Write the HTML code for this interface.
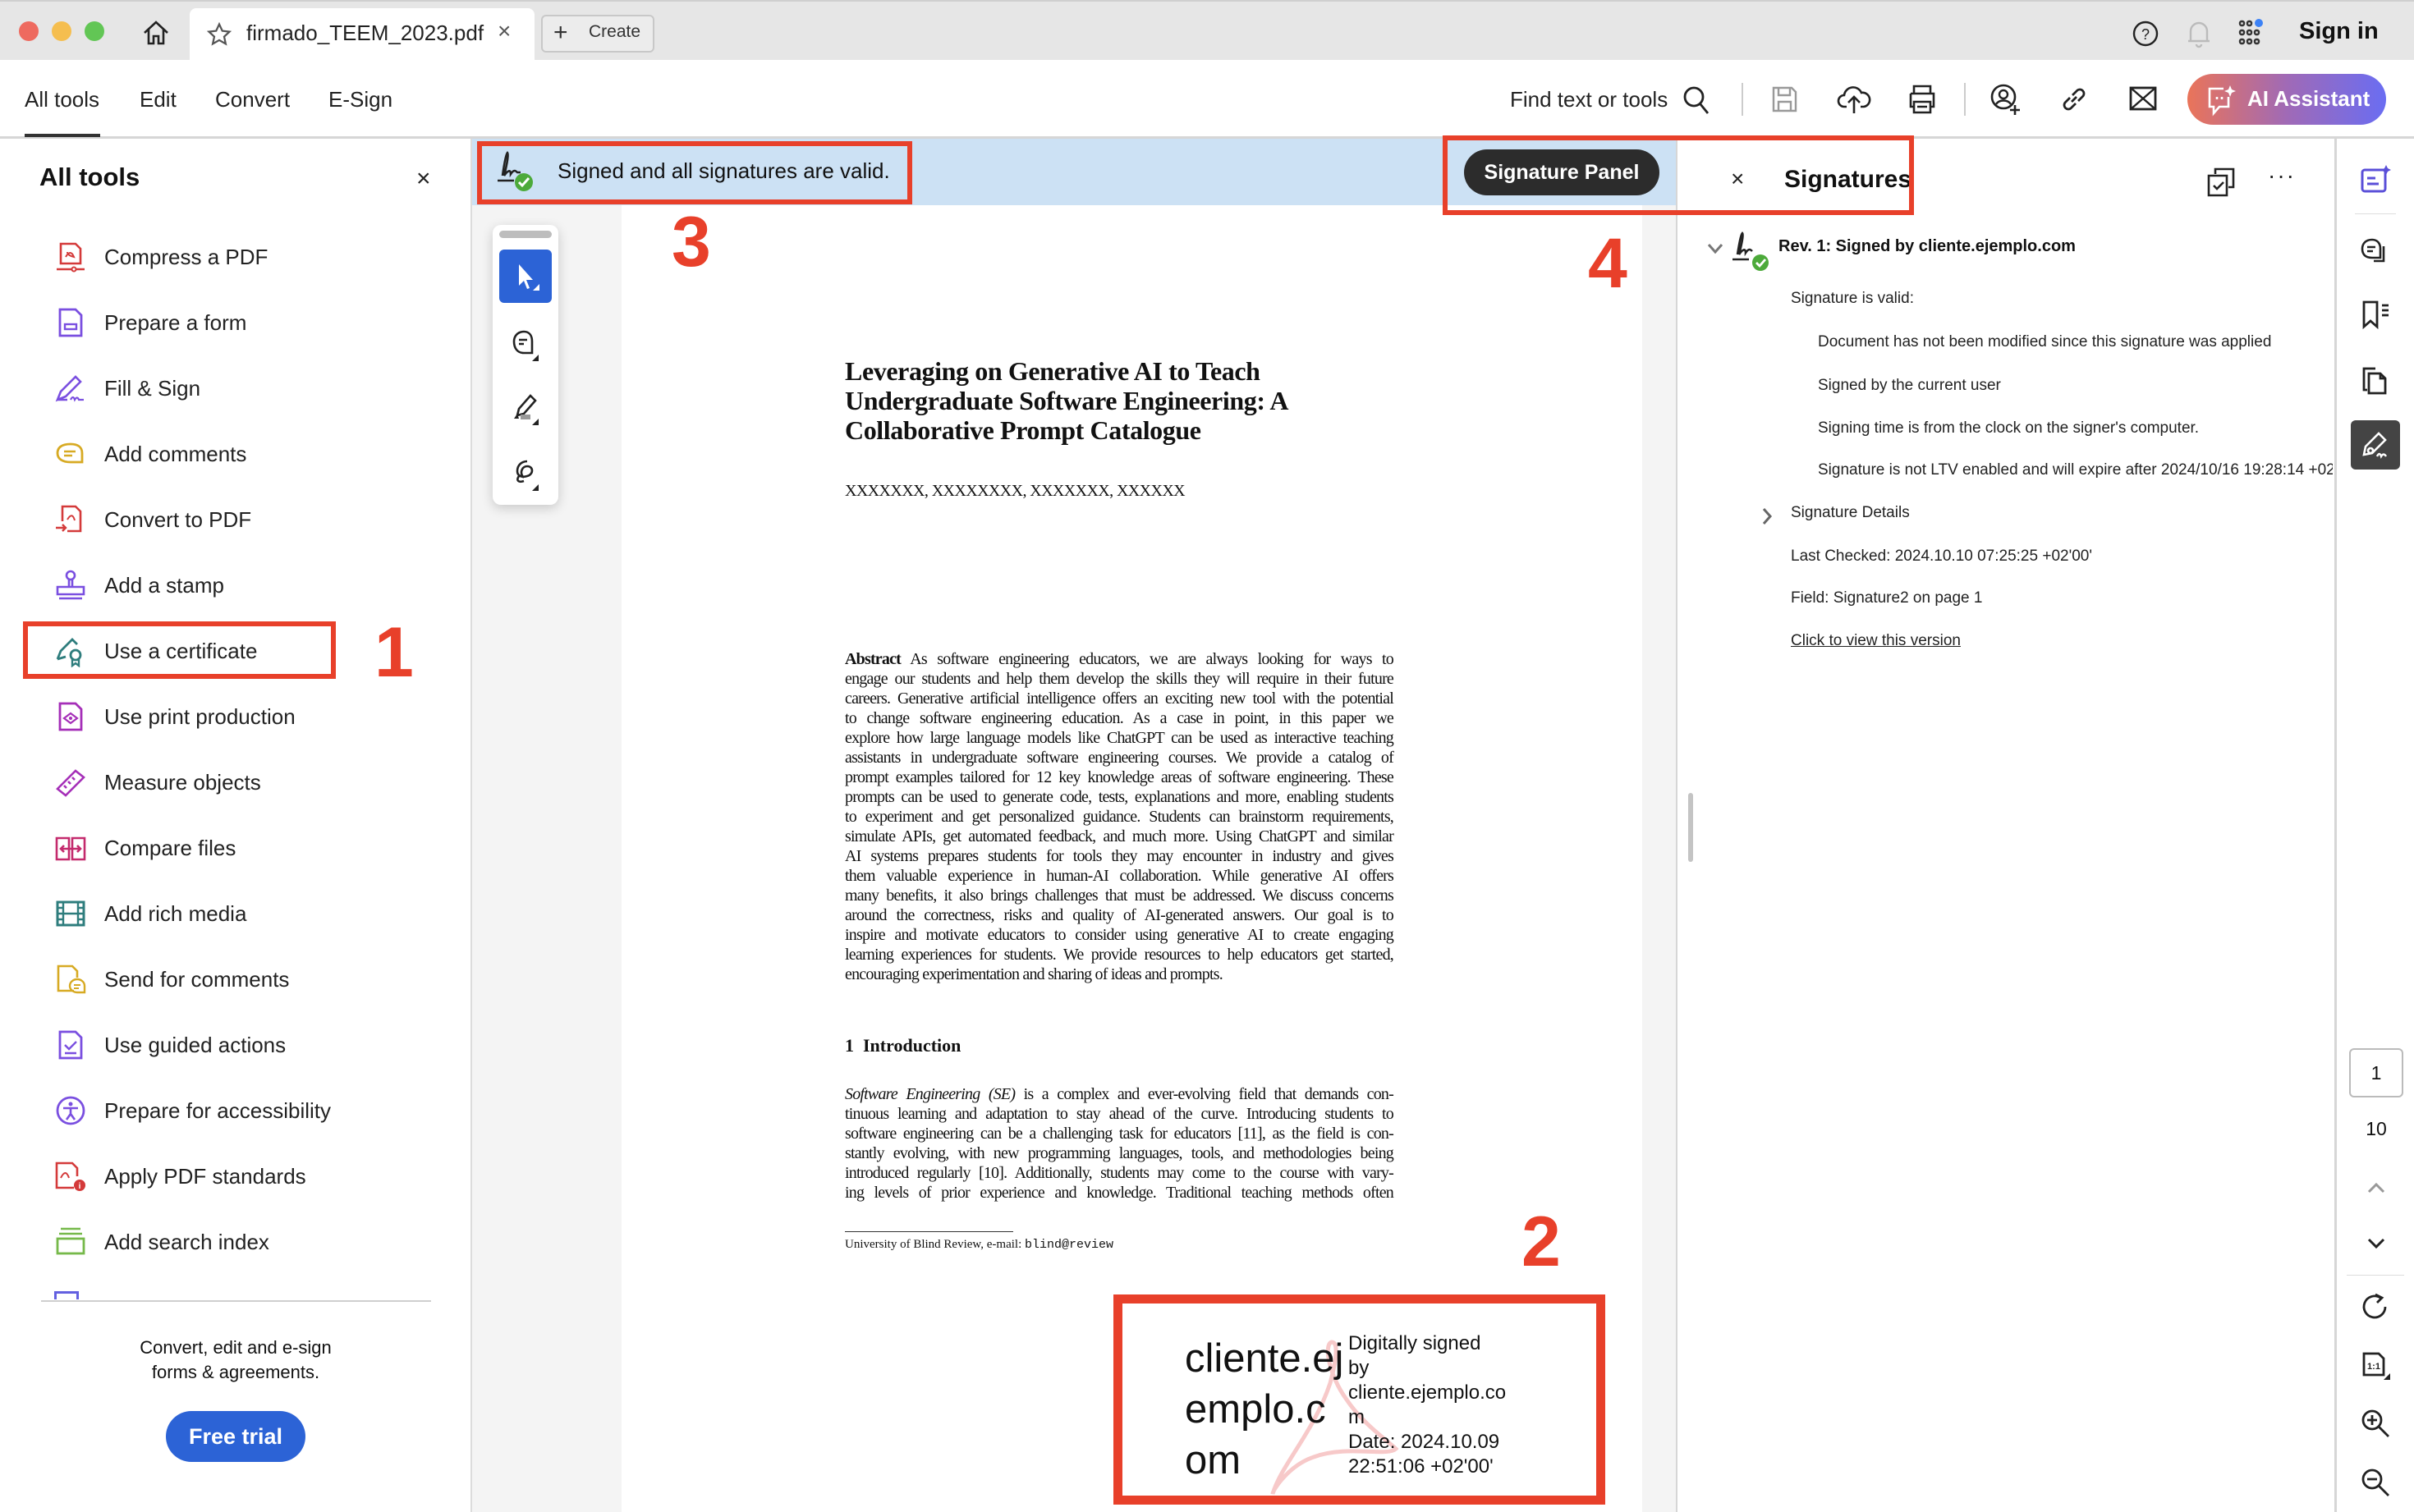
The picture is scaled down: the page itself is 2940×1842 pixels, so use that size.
<!DOCTYPE html>
<html><head><meta charset="utf-8">
<style>
*{margin:0;padding:0;box-sizing:border-box}
body{width:2940px;height:1842px;position:relative;overflow:hidden;background:#fff;font-family:"Liberation Sans",sans-serif;color:#222}
.a{position:absolute}
.t{position:absolute;white-space:nowrap}
.item{position:absolute;left:127px;font-size:26px;color:#222;white-space:nowrap;line-height:30px}
.ic{position:absolute;left:66px;width:40px;height:40px}
.ser{font-family:"Liberation Serif",serif;color:#111}
.ab{position:absolute;left:1029px;width:668px;font-size:20px;letter-spacing:-0.8px;text-align:justify;text-align-last:justify;white-space:nowrap;line-height:24px}
.sp{position:absolute;left:2214px;font-size:19px;white-space:nowrap;color:#222}
.red{border:6px solid #e8402a;position:absolute}
.num{position:absolute;color:#e8402a;font-weight:bold;font-size:86px;line-height:1}
.rs{position:absolute;left:2873px;width:40px;height:40px}
</style></head><body>

<!-- tab bar -->
<div class="a" style="left:0;top:0;width:2940px;height:73px;background:#e6e6e6;border-top:2px solid #cfcfcf"></div>
<div class="a" style="left:23px;top:26px;width:24px;height:24px;border-radius:50%;background:#ee6a5f"></div>
<div class="a" style="left:63px;top:26px;width:24px;height:24px;border-radius:50%;background:#f5be4f"></div>
<div class="a" style="left:103px;top:26px;width:24px;height:24px;border-radius:50%;background:#62c655"></div>
<svg class="a" style="left:172px;top:22px" width="36" height="36" viewBox="0 0 36 36"><path d="M4 18 L18 5 L32 18 M9 14 V31 H15 V22 H21 V31 H27 V14" fill="none" stroke="#222" stroke-width="2.6"/></svg>
<div class="a" style="left:231px;top:10px;width:420px;height:63px;background:#fff;border-radius:8px 8px 0 0"></div>
<svg class="a" style="left:252px;top:27px" width="30" height="30" viewBox="0 0 24 24"><path d="M12 2l3 6.5 7 .8-5.2 4.8 1.5 7L12 17.5 5.7 21.1l1.5-7L2 9.3l7-.8z" fill="none" stroke="#555" stroke-width="1.8"/></svg>
<div class="t" style="left:300px;top:25px;font-size:26px;color:#222">firmado_TEEM_2023.pdf</div>
<div class="t" style="left:606px;top:22px;font-size:28px;color:#555">×</div>
<div class="a" style="left:659px;top:18px;width:138px;height:46px;border:2px solid #c8c8c8;border-radius:6px;background:#ececec"></div>
<div class="t" style="left:674px;top:23px;font-size:30px;color:#333">+</div>
<div class="t" style="left:717px;top:27px;font-size:21px;color:#333">Create</div>
<svg class="a" style="left:2596px;top:24px" width="34" height="34" viewBox="0 0 34 34"><circle cx="17" cy="17" r="14" fill="none" stroke="#222" stroke-width="2.4"/><text x="17" y="24" text-anchor="middle" font-size="18" font-family="Liberation Sans" fill="#222">?</text></svg>
<svg class="a" style="left:2662px;top:22px" width="32" height="38" viewBox="0 0 32 38"><path d="M6 28 V16 a10 10 0 0 1 20 0 V28 Z M3 28 H29 M13 32 a3 3 0 0 0 6 0" fill="none" stroke="#bbb" stroke-width="2.4"/></svg>
<svg class="a" style="left:2725px;top:22px" width="36" height="36" viewBox="0 0 36 36"><g fill="none" stroke="#333" stroke-width="2.4"><rect x="3" y="4" width="5" height="5" rx="2"/><rect x="12" y="4" width="5" height="5" rx="2"/><rect x="3" y="15" width="5" height="5" rx="2"/><rect x="12" y="15" width="5" height="5" rx="2"/><rect x="21" y="15" width="5" height="5" rx="2"/><rect x="3" y="26" width="5" height="5" rx="2"/><rect x="12" y="26" width="5" height="5" rx="2"/><rect x="21" y="26" width="5" height="5" rx="2"/></g><circle cx="26" cy="6" r="5" fill="#3c82f6"/></svg>
<div class="t" style="left:2800px;top:22px;font-size:29px;font-weight:bold;color:#111">Sign in</div>

<!-- toolbar -->
<div class="a" style="left:0;top:166px;width:2940px;height:3px;background:#d6d6d6"></div>
<div class="t" style="left:30px;top:106px;font-size:26px">All tools</div>
<div class="a" style="left:30px;top:163px;width:92px;height:4px;background:#333"></div>
<div class="t" style="left:170px;top:106px;font-size:26px">Edit</div>
<div class="t" style="left:262px;top:106px;font-size:26px">Convert</div>
<div class="t" style="left:400px;top:106px;font-size:26px">E-Sign</div>
<div class="t" style="left:1839px;top:106px;font-size:26px">Find text or tools</div>
<svg class="a" style="left:2048px;top:102px" width="36" height="40" viewBox="0 0 36 40"><circle cx="15" cy="16" r="11" fill="none" stroke="#222" stroke-width="2.8"/><path d="M23 25 L32 36" stroke="#222" stroke-width="2.8"/></svg>
<div class="a" style="left:2121px;top:101px;width:2px;height:40px;background:#ccc"></div>
<svg class="a" style="left:2156px;top:104px" width="34" height="34" viewBox="0 0 34 34"><path d="M4 3 H26 L31 8 V31 H4 Z M10 3 V12 H24 V3 M10 31 V20 H25 V31" fill="none" stroke="#999" stroke-width="2.4"/></svg>
<svg class="a" style="left:2237px;top:100px" width="42" height="42" viewBox="0 0 42 42"><path d="M12 30 H9 a7 7 0 0 1 0-14 a11 11 0 0 1 21-3 a8 8 0 0 1 3 17 H29 M21 38 V19 M14 25 L21 18 L28 25" fill="none" stroke="#222" stroke-width="2.6"/></svg>
<svg class="a" style="left:2322px;top:102px" width="38" height="38" viewBox="0 0 38 38"><path d="M9 12 V3 H29 V12 M5 12 H33 V28 H29 M9 28 H5 V12 M9 22 H29 V35 H9 Z M13 28 H25" fill="none" stroke="#222" stroke-width="2.6"/></svg>
<div class="a" style="left:2392px;top:101px;width:2px;height:40px;background:#ccc"></div>
<svg class="a" style="left:2422px;top:100px" width="40" height="42" viewBox="0 0 40 42"><circle cx="18" cy="18" r="14" fill="none" stroke="#222" stroke-width="2.6"/><circle cx="18" cy="15" r="5" fill="none" stroke="#222" stroke-width="2.4"/><path d="M9 27 a10 8 0 0 1 18 0 M32 28 V40 M26 34 H38" fill="none" stroke="#222" stroke-width="2.6"/></svg>
<svg class="a" style="left:2507px;top:102px" width="38" height="38" viewBox="0 0 38 38"><path d="M16 22 L22 16 M14 17 L8 23 a5 5 0 0 0 7 7 L21 24 M24 21 L30 15 a5 5 0 0 0-7-7 L17 14" fill="none" stroke="#222" stroke-width="2.8"/></svg>
<svg class="a" style="left:2592px;top:104px" width="36" height="32" viewBox="0 0 36 32"><rect x="3" y="3" width="30" height="26" fill="none" stroke="#222" stroke-width="2.8"/><path d="M3 3 L18 16 L33 3 M3 29 L18 16 L33 29" fill="none" stroke="#222" stroke-width="2.4"/></svg>
<div class="a" style="left:2664px;top:90px;width:242px;height:62px;border-radius:31px;background:linear-gradient(90deg,#ea7459,#a06ab6 50%,#6a6df2)"></div>
<svg class="a" style="left:2686px;top:102px" width="38" height="40" viewBox="0 0 38 40"><path d="M22 6 H5 V28 H10 V36 L17 28 H28 V16" fill="none" stroke="#fff" stroke-width="2.6"/><path d="M30 2 l2 5 5 2-5 2-2 5-2-5-5-2 5-2z" fill="#fff"/><path d="M14 16 v3 M20 16 v3" stroke="#fff" stroke-width="2.6"/></svg>
<div class="t" style="left:2737px;top:105px;font-size:26px;font-weight:bold;color:#fff">AI Assistant</div>

<!-- left panel -->
<div class="a" style="left:573px;top:169px;width:2px;height:1673px;background:#dcdcdc"></div>
<div class="t" style="left:48px;top:198px;font-size:31px;font-weight:bold;color:#111">All tools</div>
<div class="t" style="left:507px;top:201px;font-size:30px;color:#222">×</div>

<svg class="ic" style="top:293px" viewBox="0 0 40 40"><path d="M8 4 H26 L32 10 V28 H8 Z" fill="none" stroke="#d43a3a" stroke-width="2.6"/><path d="M14 20 q6-10 10 0 q-8-2-8 -6" fill="none" stroke="#d43a3a" stroke-width="2"/><path d="M3 35 H37" stroke="#d43a3a" stroke-width="2.6"/><circle cx="24" cy="35" r="2.5" fill="#fff" stroke="#d43a3a" stroke-width="2"/></svg>
<div class="item" style="top:298px">Compress a PDF</div>
<svg class="ic" style="top:373px" viewBox="0 0 40 40"><path d="M7 4 H26 L33 11 V36 H7 Z" fill="none" stroke="#7a4fe0" stroke-width="2.8"/><rect x="13" y="22" width="14" height="6" fill="none" stroke="#7a4fe0" stroke-width="2.4"/></svg>
<div class="item" style="top:378px">Prepare a form</div>
<svg class="ic" style="top:453px" viewBox="0 0 40 40"><path d="M4 34 L8 24 L26 6 L32 12 L14 30 Z M4 34 H16" fill="none" stroke="#7a4fe0" stroke-width="2.6"/><path d="M20 34 q3-6 5 0 q3-5 5 0 h6" fill="none" stroke="#7a4fe0" stroke-width="2.2"/></svg>
<div class="item" style="top:458px">Fill &amp; Sign</div>
<svg class="ic" style="top:533px" viewBox="0 0 40 40"><path d="M20 8 C8 8 4 13 4 19 C4 26 10 30 20 30 H34 V19 C34 12 29 8 20 8 Z" fill="none" stroke="#d7aa23" stroke-width="2.8"/><path d="M12 17 H26 M12 22 H22" stroke="#d7aa23" stroke-width="2.4"/></svg>
<div class="item" style="top:538px">Add comments</div>
<svg class="ic" style="top:613px" viewBox="0 0 40 40"><path d="M10 22 V4 H26 L32 10 V34 H16" fill="none" stroke="#d43a3a" stroke-width="2.6"/><path d="M2 30 H14 M10 26 L14 30 L10 34" fill="none" stroke="#d43a3a" stroke-width="2.4"/><path d="M16 20 q6-10 9 1" fill="none" stroke="#d43a3a" stroke-width="2"/></svg>
<div class="item" style="top:618px">Convert to PDF</div>
<svg class="ic" style="top:693px" viewBox="0 0 40 40"><circle cx="20" cy="8" r="5" fill="none" stroke="#7a4fe0" stroke-width="2.6"/><path d="M18 13 V22 M22 13 V22 M4 22 H36 V31 H4 Z M6 36 H34" fill="none" stroke="#7a4fe0" stroke-width="2.6"/></svg>
<div class="item" style="top:698px">Add a stamp</div>
<svg class="ic" style="top:773px" viewBox="0 0 40 40"><path d="M4 30 L8 20 L22 6 L28 12 M4 30 L14 27" fill="none" stroke="#2e7d7d" stroke-width="2.8"/><circle cx="26" cy="25" r="6" fill="none" stroke="#2e7d7d" stroke-width="2.8"/><path d="M22 30 V38 L26 35 L30 38 V30" fill="none" stroke="#2e7d7d" stroke-width="2.4"/></svg>
<div class="item" style="top:778px">Use a certificate</div>
<svg class="ic" style="top:853px" viewBox="0 0 40 40"><path d="M7 4 H26 L33 11 V36 H7 Z" fill="none" stroke="#a52fb8" stroke-width="2.8"/><path d="M12 22 L20 16 L28 22 L20 28 Z" fill="none" stroke="#a52fb8" stroke-width="2.2"/><circle cx="20" cy="22" r="2" fill="#a52fb8"/></svg>
<div class="item" style="top:858px">Use print production</div>
<svg class="ic" style="top:933px" viewBox="0 0 40 40"><path d="M4 28 L26 6 L36 14 L14 36 Z M12 24 L15 27 M17 19 L20 22 M22 14 L25 17" fill="none" stroke="#a52fb8" stroke-width="2.6"/></svg>
<div class="item" style="top:938px">Measure objects</div>
<svg class="ic" style="top:1013px" viewBox="0 0 40 40"><path d="M3 8 H18 V34 H3 Z M22 8 H37 V34 H22 Z M8 21 H32 M12 17 L8 21 L12 25 M28 17 L32 21 L28 25" fill="none" stroke="#c42a6d" stroke-width="2.6"/></svg>
<div class="item" style="top:1018px">Compare files</div>
<svg class="ic" style="top:1093px" viewBox="0 0 40 40"><rect x="4" y="6" width="32" height="28" fill="none" stroke="#2e7d7d" stroke-width="3"/><path d="M11 6 V34 M29 6 V34 M4 13 H11 M4 20 H11 M4 27 H11 M29 13 H36 M29 20 H36 M29 27 H36 M11 20 H29" stroke="#2e7d7d" stroke-width="2.4"/></svg>
<div class="item" style="top:1098px">Add rich media</div>
<svg class="ic" style="top:1173px" viewBox="0 0 40 40"><path d="M24 34 H5 V4 H22 L28 10 V18" fill="none" stroke="#d7aa23" stroke-width="2.6"/><path d="M28 20 a9 8 0 1 0 0 16 H37 V28 a9 8 0 0 0-9-8" fill="none" stroke="#d7aa23" stroke-width="2.4"/><path d="M24 27 H32 M24 31 H30" stroke="#d7aa23" stroke-width="2"/></svg>
<div class="item" style="top:1178px">Send for comments</div>
<svg class="ic" style="top:1253px" viewBox="0 0 40 40"><path d="M7 4 H26 L33 11 V36 H7 Z" fill="none" stroke="#7a4fe0" stroke-width="2.8"/><path d="M13 20 L18 25 L27 16 M13 30 H27" fill="none" stroke="#7a4fe0" stroke-width="2.4"/></svg>
<div class="item" style="top:1258px">Use guided actions</div>
<svg class="ic" style="top:1333px" viewBox="0 0 40 40"><circle cx="20" cy="20" r="16" fill="none" stroke="#7a4fe0" stroke-width="2.8"/><circle cx="20" cy="12" r="2.5" fill="#7a4fe0"/><path d="M11 17 H29 M20 17 V24 M15 31 L20 24 L25 31" fill="none" stroke="#7a4fe0" stroke-width="2.6"/></svg>
<div class="item" style="top:1338px">Prepare for accessibility</div>
<svg class="ic" style="top:1413px" viewBox="0 0 40 40"><path d="M24 34 H3 V4 H22 L28 10 V20" fill="none" stroke="#d43a3a" stroke-width="2.6"/><path d="M8 22 q6-12 10 0" fill="none" stroke="#d43a3a" stroke-width="2"/><circle cx="31" cy="31" r="7" fill="#d43a3a"/><text x="31" y="35" text-anchor="middle" font-size="10" font-weight="bold" fill="#fff" font-family="Liberation Sans">i</text></svg>
<div class="item" style="top:1418px">Apply PDF standards</div>
<svg class="ic" style="top:1493px" viewBox="0 0 40 40"><path d="M8 4 H32 M6 10 H34" stroke="#76b94a" stroke-width="2.6"/><rect x="4" y="16" width="32" height="18" fill="none" stroke="#76b94a" stroke-width="2.8"/></svg>
<div class="item" style="top:1498px">Add search index</div>
<div class="a" style="left:66px;top:1573px;width:30px;height:10px;border:3px solid #6360e0;border-bottom:none"></div>
<div class="a" style="left:50px;top:1584px;width:475px;height:2px;background:#cfcfcf"></div>
<div class="t" style="left:0;width:574px;top:1627px;text-align:center;font-size:22px;line-height:30px;color:#111">Convert, edit and e-sign<br>forms &amp; agreements.</div>
<div class="a" style="left:202px;top:1719px;width:170px;height:62px;border-radius:31px;background:#2c63d6;color:#fff;font-weight:bold;font-size:27px;text-align:center;line-height:62px">Free trial</div>

<div class="red" style="left:28px;top:757px;width:381px;height:70px"></div>
<div class="num" style="left:456px;top:752px">1</div>

<!-- document area -->
<div class="a" style="left:575px;top:250px;width:1468px;height:1592px;background:#f4f4f4"></div>
<div class="a" style="left:757px;top:250px;width:1243px;height:1592px;background:#fff"></div>
<div class="a" style="left:575px;top:169px;width:1468px;height:81px;background:#cce1f4"></div>
<div class="a" style="left:2041px;top:169px;width:2px;height:1673px;background:#d6d6d6"></div>

<svg class="a" style="left:602px;top:180px" width="56" height="56" viewBox="0 0 56 56"><path d="M10 34 C12 20 14 8 16 6 C18 8 14 26 12 34 C16 28 20 26 20 32 C24 26 26 28 28 30 L32 30" fill="none" stroke="#222" stroke-width="2.6"/><path d="M4 40 H24" stroke="#222" stroke-width="2.6"/><circle cx="36" cy="42" r="11" fill="#4caa3a"/><path d="M30 42 L34 46 L42 37" fill="none" stroke="#fff" stroke-width="3"/></svg>
<div class="t" style="left:679px;top:193px;font-size:26px;color:#111">Signed and all signatures are valid.</div>
<div class="red" style="left:581px;top:172px;width:530px;height:77px"></div>
<div class="num" style="left:818px;top:252px">3</div>

<div class="a" style="left:1783px;top:182px;width:238px;height:56px;border-radius:28px;background:#2c2c2c;color:#fff;font-weight:bold;font-size:25px;text-align:center;line-height:56px">Signature Panel</div>

<!-- floating toolbar -->
<div class="a" style="left:600px;top:274px;width:80px;height:341px;border-radius:10px;background:#fff;box-shadow:0 4px 14px rgba(0,0,0,.18)"></div>
<div class="a" style="left:608px;top:281px;width:64px;height:9px;border-radius:5px;background:#bdbdbd"></div>
<div class="a" style="left:608px;top:304px;width:64px;height:65px;border-radius:6px;background:#2c63d6"></div>
<svg class="a" style="left:624px;top:318px" width="36" height="40" viewBox="0 0 36 40"><path d="M8 4 V30 L14 24 L18 34 L21 33 L17 23 L25 23 Z" fill="#fff"/><path d="M33 28 V36 H25 Z" fill="#fff"/></svg>
<svg class="a" style="left:620px;top:398px" width="44" height="44" viewBox="0 0 44 44"><path d="M18 6 C10 6 6 12 6 18 C6 26 10 32 18 32 H28 V18 C28 10 24 6 18 6 Z" fill="none" stroke="#222" stroke-width="2.6"/><path d="M12 16 H22 M12 21 H18" stroke="#222" stroke-width="2.4"/><path d="M36 34 V42 H28 Z" fill="#222"/></svg>
<svg class="a" style="left:620px;top:476px" width="44" height="44" viewBox="0 0 44 44"><path d="M10 30 L12 22 L26 6 L32 12 L18 28 Z" fill="none" stroke="#222" stroke-width="2.6"/><path d="M6 34 L10 28 L12 34 Z" fill="#222"/><rect x="14" y="29" width="12" height="6" fill="#999"/><path d="M36 34 V42 H28 Z" fill="#222"/></svg>
<svg class="a" style="left:620px;top:556px" width="44" height="44" viewBox="0 0 44 44"><path d="M18 26 C12 20 16 12 22 12 C30 12 30 22 22 24 C16 26 10 24 10 18 C10 10 16 6 22 6 M12 24 C8 30 12 32 18 30" fill="none" stroke="#222" stroke-width="2.6"/><path d="M36 34 V42 H28 Z" fill="#222"/></svg>

<!-- document text -->
<div class="t ser" style="left:1029px;top:434px;font-size:32px;font-weight:bold;line-height:36px;letter-spacing:-0.4px">Leveraging on Generative AI to Teach<br>Undergraduate Software Engineering: A<br>Collaborative Prompt Catalogue</div>
<div class="t ser" style="left:1029px;top:587px;font-size:20px;letter-spacing:-0.6px">XXXXXXX, XXXXXXXX, XXXXXXX, XXXXXX</div>

<div class="ser">
<div class="ab" style="top:791px"><b>Abstract</b> As software engineering educators, we are always looking for ways to</div>
<div class="ab" style="top:815px">engage our students and help them develop the skills they will require in their future</div>
<div class="ab" style="top:839px">careers. Generative artificial intelligence offers an exciting new tool with the potential</div>
<div class="ab" style="top:863px">to change software engineering education. As a case in point, in this paper we</div>
<div class="ab" style="top:887px">explore how large language models like ChatGPT can be used as interactive teaching</div>
<div class="ab" style="top:911px">assistants in undergraduate software engineering courses. We provide a catalog of</div>
<div class="ab" style="top:935px">prompt examples tailored for 12 key knowledge areas of software engineering. These</div>
<div class="ab" style="top:959px">prompts can be used to generate code, tests, explanations and more, enabling students</div>
<div class="ab" style="top:983px">to experiment and get personalized guidance. Students can brainstorm requirements,</div>
<div class="ab" style="top:1007px">simulate APIs, get automated feedback, and much more. Using ChatGPT and similar</div>
<div class="ab" style="top:1031px">AI systems prepares students for tools they may encounter in industry and gives</div>
<div class="ab" style="top:1055px">them valuable experience in human-AI collaboration. While generative AI offers</div>
<div class="ab" style="top:1079px">many benefits, it also brings challenges that must be addressed. We discuss concerns</div>
<div class="ab" style="top:1103px">around the correctness, risks and quality of AI-generated answers. Our goal is to</div>
<div class="ab" style="top:1127px">inspire and motivate educators to consider using generative AI to create engaging</div>
<div class="ab" style="top:1151px">learning experiences for students. We provide resources to help educators get started,</div>
<div class="ab" style="top:1175px;text-align-last:left">encouraging experimentation and sharing of ideas and prompts.</div>

<div class="t" style="left:1029px;top:1261px;font-size:22px;font-weight:bold">1&nbsp; Introduction</div>
<div class="ab" style="top:1321px"><i>Software Engineering (SE)</i> is a complex and ever-evolving field that demands con-</div>
<div class="ab" style="top:1345px">tinuous learning and adaptation to stay ahead of the curve. Introducing students to</div>
<div class="ab" style="top:1369px">software engineering can be a challenging task for educators [11], as the field is con-</div>
<div class="ab" style="top:1393px">stantly evolving, with new programming languages, tools, and methodologies being</div>
<div class="ab" style="top:1417px">introduced regularly [10]. Additionally, students may come to the course with vary-</div>
<div class="ab" style="top:1441px">ing levels of prior experience and knowledge. Traditional teaching methods often</div>
</div>
<div class="a" style="left:1029px;top:1500px;width:205px;height:1px;background:#333"></div>
<div class="t ser" style="left:1029px;top:1508px;font-size:15px">University of Blind Review, e-mail: <span style="font-family:'Liberation Mono',monospace">blind@review</span></div>

<div class="num" style="left:1853px;top:1470px">2</div>
<div class="num" style="left:1934px;top:278px">4</div>

<!-- signature appearance -->
<svg class="a" style="left:1540px;top:1625px" width="170" height="200" viewBox="0 0 170 200"><path d="M10 195 C20 160 60 120 80 60 C88 30 90 10 82 10 C72 12 78 50 100 80 C120 110 150 130 160 140 C150 150 100 135 60 150 C30 160 10 190 10 195 Z" fill="none" stroke="#f7c9c9" stroke-width="5"/></svg>
<div class="t" style="left:1443px;top:1624px;font-size:49px;line-height:62px;color:#111">cliente.ej<br>emplo.c<br>om</div>
<div class="t" style="left:1642px;top:1622px;font-size:24px;line-height:30px;color:#111">Digitally signed<br>by<br>cliente.ejemplo.co<br>m<br>Date: 2024.10.09<br>22:51:06 +02'00'</div>
<div class="a" style="left:1356px;top:1577px;width:599px;height:256px;border:11px solid #e8402a"></div>

<!-- right panel -->
<div class="t" style="left:2108px;top:202px;font-size:28px;color:#222">×</div>
<div class="t" style="left:2173px;top:202px;font-size:30px;font-weight:bold;color:#111">Signatures</div>
<div class="red" style="left:1757px;top:165px;width:574px;height:97px"></div>
<svg class="a" style="left:2686px;top:202px" width="38" height="40" viewBox="0 0 38 40"><path d="M12 10 V4 H34 V26 H28 M4 12 H26 V36 H4 Z M10 24 L14 28 L22 20" fill="none" stroke="#222" stroke-width="2.6"/></svg>
<div class="t" style="left:2762px;top:198px;font-size:28px;color:#222;letter-spacing:2px">···</div>

<svg class="a" style="left:2078px;top:293px" width="22" height="20" viewBox="0 0 22 20"><path d="M3 5 L11 14 L19 5" fill="none" stroke="#777" stroke-width="3"/></svg>
<svg class="a" style="left:2106px;top:280px" width="56" height="56" viewBox="0 0 56 56"><path d="M10 30 C12 18 14 6 16 4 C18 6 14 22 12 30 C16 24 20 22 20 28 C24 22 26 24 28 26" fill="none" stroke="#222" stroke-width="2.6"/><path d="M4 36 H24" stroke="#222" stroke-width="2.6"/><circle cx="38" cy="40" r="10" fill="#4caa3a"/><path d="M33 40 L37 44 L44 36" fill="none" stroke="#fff" stroke-width="2.8"/></svg>
<div class="t" style="left:2166px;top:289px;font-size:20px;font-weight:bold;color:#111">Rev. 1: Signed by cliente.ejemplo.com</div>
<div class="t" style="left:2181px;top:353px;font-size:19px">Signature is valid:</div>
<div class="sp" style="top:406px">Document has not been modified since this signature was applied</div>
<div class="sp" style="top:459px">Signed by the current user</div>
<div class="sp" style="top:511px">Signing time is from the clock on the signer's computer.</div>
<div class="a" style="left:2214px;top:556px;width:627px;height:40px;overflow:hidden"><div class="t" style="left:0;top:6px;font-size:19px">Signature is not LTV enabled and will expire after 2024/10/16 19:28:14 +02'00'</div></div>
<svg class="a" style="left:2144px;top:617px" width="16" height="24" viewBox="0 0 16 24"><path d="M4 3 L12 12 L4 21" fill="none" stroke="#666" stroke-width="3"/></svg>
<div class="t" style="left:2181px;top:614px;font-size:19px">Signature Details</div>
<div class="t" style="left:2181px;top:667px;font-size:19px">Last Checked: 2024.10.10 07:25:25 +02'00'</div>
<div class="t" style="left:2181px;top:718px;font-size:19px">Field: Signature2 on page 1</div>
<div class="t" style="left:2181px;top:770px;font-size:19px;text-decoration:underline">Click to view this version</div>
<div class="a" style="left:2056px;top:966px;width:6px;height:84px;border-radius:3px;background:#c4c4c4"></div>

<!-- right sidebar -->
<div class="a" style="left:2843px;top:169px;width:3px;height:1673px;background:#d6d6d6"></div>
<svg class="rs" style="top:199px" viewBox="0 0 40 40"><rect x="4" y="8" width="28" height="26" rx="3" fill="none" stroke="#5a4fd8" stroke-width="3"/><path d="M10 18 H20 M10 25 H24" stroke="#5a4fd8" stroke-width="3"/><path d="M33 2 l2 4 4 2-4 2-2 4-2-4-4-2 4-2z" fill="#5a4fd8"/></svg>
<div class="a" style="left:2868px;top:260px;width:50px;height:1px;background:#ddd"></div>
<svg class="rs" style="top:286px" viewBox="0 0 40 40"><path d="M16 6 C8 6 4 11 4 17 C4 24 8 28 16 28 H26 V17 C26 10 22 6 16 6 Z M30 14 V32 H18" fill="none" stroke="#222" stroke-width="2.6"/><path d="M10 15 H20 M10 20 H17" stroke="#222" stroke-width="2.4"/></svg>
<svg class="rs" style="top:364px" viewBox="0 0 40 40"><path d="M6 4 H22 V34 L14 27 L6 34 Z M28 8 H36 M28 14 H36 M28 20 H36" fill="none" stroke="#222" stroke-width="2.8"/></svg>
<svg class="rs" style="top:443px" viewBox="0 0 40 40"><path d="M10 32 H6 V6 H20 M12 12 H26 L32 18 V36 H12 Z M26 12 V18 H32" fill="none" stroke="#222" stroke-width="2.8"/></svg>
<div class="a" style="left:2863px;top:512px;width:60px;height:60px;border-radius:6px;background:#444"></div>
<svg class="rs" style="top:522px" viewBox="0 0 40 40"><path d="M6 32 L8 22 L24 6 L32 14 L16 30 Z M6 32 L16 30 M14 24 a3 3 0 1 0 0.1 0" fill="none" stroke="#fff" stroke-width="2.6"/><path d="M22 34 q3-6 5 0 q3-5 6 0" fill="none" stroke="#fff" stroke-width="2.4"/></svg>
<div class="a" style="left:2861px;top:1277px;width:66px;height:60px;border:2px solid #bbb;border-radius:6px;text-align:center;line-height:56px;font-size:23px;color:#111">1</div>
<div class="t" style="left:2861px;width:66px;top:1362px;text-align:center;font-size:23px;color:#111">10</div>
<svg class="a" style="left:2881px;top:1438px" width="26" height="18" viewBox="0 0 26 18"><path d="M4 14 L13 5 L22 14" fill="none" stroke="#999" stroke-width="3"/></svg>
<svg class="a" style="left:2881px;top:1506px" width="26" height="18" viewBox="0 0 26 18"><path d="M4 4 L13 13 L22 4" fill="none" stroke="#222" stroke-width="3"/></svg>
<div class="a" style="left:2858px;top:1553px;width:70px;height:1px;background:#ddd"></div>
<svg class="rs" style="top:1572px" viewBox="0 0 40 40"><path d="M32 20 A13 13 0 1 1 26 9 M20 5 L28 9 L22 15" fill="none" stroke="#222" stroke-width="2.8"/></svg>
<svg class="rs" style="top:1643px" viewBox="0 0 40 40"><path d="M6 6 H24 L30 12 V32 H6 Z" fill="none" stroke="#222" stroke-width="2.8"/><text x="18" y="25" text-anchor="middle" font-size="11" font-weight="bold" font-family="Liberation Sans" fill="#222">1:1</text><path d="M38 30 V38 H30 Z" fill="#222"/></svg>
<svg class="rs" style="top:1714px" viewBox="0 0 40 40"><circle cx="16" cy="16" r="11" fill="none" stroke="#222" stroke-width="2.8"/><path d="M24 24 L36 36 M10 16 H22 M16 10 V22" stroke="#222" stroke-width="2.8"/></svg>
<svg class="rs" style="top:1786px" viewBox="0 0 40 40"><circle cx="16" cy="16" r="11" fill="none" stroke="#222" stroke-width="2.8"/><path d="M24 24 L36 36 M10 16 H22" stroke="#222" stroke-width="2.8"/></svg>
</body></html>
